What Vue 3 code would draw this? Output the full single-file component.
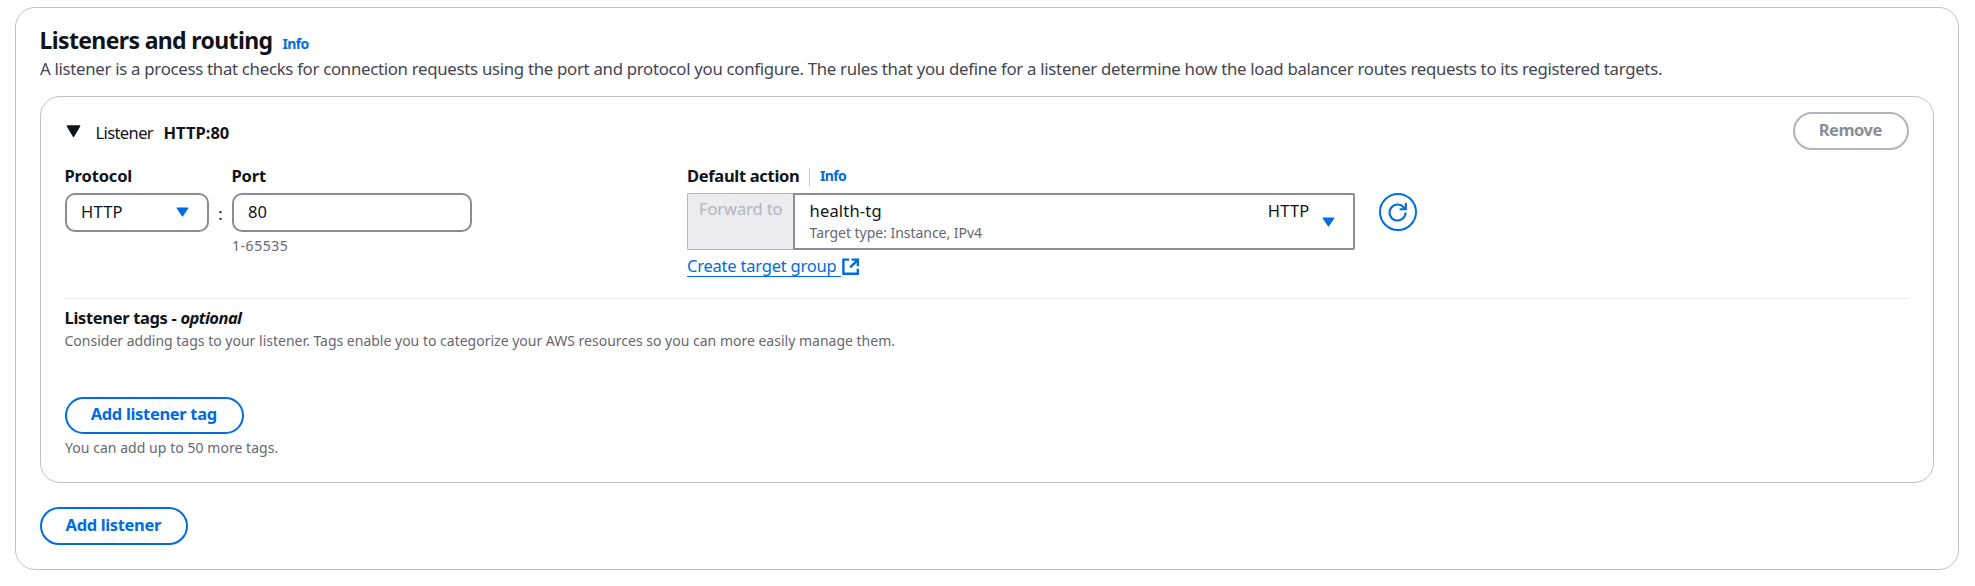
<script setup>
import { ref } from 'vue'

const protocol = ref('HTTP')
const port = ref('80')
const target = ref({ name: 'health-tg', detail: 'Target type: Instance, IPv4', protocol: 'HTTP' })
</script>

<template>
  <section class="panel">
    <header class="panel-head">
      <h2>Listeners and routing</h2>
      <a class="info">Info</a>
    </header>
    <p class="desc">A listener is a process that checks for connection requests using the port and protocol you configure. The rules that you define for a listener determine how the load balancer routes requests to its registered targets.</p>

    <div class="card">
      <div class="card-head">
        <div class="summary">
          <svg class="expand" width="15" height="13" viewBox="0 0 15 13"><path d="M1.3 1h12.4L7.5 11.3z" fill="#0f141a" stroke="#0f141a" stroke-width="1.4" stroke-linejoin="round" /></svg>
          <span class="summary-label">Listener</span>
          <strong class="summary-value">{{ protocol }}:{{ port }}</strong>
        </div>
        <button class="btn disabled">Remove</button>
      </div>

      <div class="fields">
        <div class="field protocol">
          <label class="lab-protocol">Protocol</label>
          <div class="control">
            <span class="http">{{ protocol }}</span>
            <svg class="caret" width="13" height="10" viewBox="0 0 13 10"><path d="M1.1 1h10.8L6.5 8.9z" fill="#006ce0" stroke="#006ce0" stroke-width="1.2" stroke-linejoin="round" /></svg>
          </div>
        </div>
        <span class="colon">:</span>
        <div class="field port">
          <label class="lab-port">Port</label>
          <div class="control">{{ port }}</div>
          <span class="hint">1-65535</span>
        </div>
        <div class="field action">
          <div class="action-label">
            <label>Default action</label>
            <i class="sep"></i>
            <a class="info">Info</a>
          </div>
          <div class="action-row">
            <div class="forward">Forward to</div>
            <div class="target">
              <div class="target-text">
                <span class="target-name">{{ target.name }}</span>
                <span class="target-detail">{{ target.detail }}</span>
              </div>
              <span class="http">{{ target.protocol }}</span>
              <svg class="caret" width="13" height="10" viewBox="0 0 13 10"><path d="M1.1 1h10.8L6.5 8.9z" fill="#006ce0" stroke="#006ce0" stroke-width="1.2" stroke-linejoin="round" /></svg>
            </div>
            <button class="refresh" aria-label="Refresh">
              <svg width="20" height="20" viewBox="0 0 20 20" fill="none" stroke="#006ce0" stroke-width="2.1"><path d="M17.6 10.6A8 8 0 1 1 15.6 5.2L17.6 7.2" /><path d="M17.8 1v6.3h-6.2" /></svg>
            </button>
          </div>
          <a class="create">
            <span>Create target group</span>
            <svg width="18" height="18" viewBox="0 0 18 18" fill="none" stroke="#006ce0" stroke-width="2.4"><path d="M7 1.6H1.4v14.2h14.4v-5" /><path d="M9.5 1.6h6.4v6.6M15.8 1.8L8.2 9.4" /></svg>
          </a>
        </div>
      </div>

      <div class="tags">
        <h3>Listener tags - <em>optional</em></h3>
        <p class="tags-desc">Consider adding tags to your listener. Tags enable you to categorize your AWS resources so you can more easily manage them.</p>
        <button class="btn add-tag">Add listener tag</button>
        <p class="tags-more">You can add up to 50 more tags.</p>
      </div>
    </div>

    <button class="btn add">Add listener</button>
  </section>
</template>

<style>
body { background: #fff; }
</style>

<style scoped>
* { box-sizing: border-box; }
.panel {
  width: 1944px;
  height: 563px;
  margin: 7px 0 0 15px;
  padding: 18px 24px 0;
  border: 1px solid #c2c2c6;
  border-radius: 20px;
  font: 16.5px/22px "Noto Sans", sans-serif;
  color: #0f141a;
  white-space: nowrap;
}
h2, h3, p { margin: 0; }
svg { display: block; flex: none; }
.panel-head { display: flex; align-items: baseline; gap: 10px; height: 32px; }
h2 { font-size: 23px; line-height: 28px; letter-spacing: -0.634px; margin-left: -0.5px; }
.info { font-size: 14px; font-weight: 700; letter-spacing: -0.6px; color: #006ce0; }
.desc { color: #424650; font-size: 16.8px; letter-spacing: -0.289px; height: 38px; }
.card {
  width: 1894px;
  height: 387px;
  padding: 15px 24px 0 24px;
  border: 1px solid #c2c2c6;
  border-radius: 20px;
}
.card-head { display: flex; justify-content: space-between; height: 53px; }
.summary { display: flex; padding-top: 10px; }
.expand { margin: 3px 14.5px 0 1px; }
.summary-label { letter-spacing: -0.6px; width: 67px; }
.summary-value { letter-spacing: 0; margin-left: 1px; }
.btn {
  display: block;
  height: 38px;
  padding: 0 1.5px 3px 0;
  border: 2px solid #006ce0;
  border-radius: 19px;
  background: #fff;
  font: 700 16.5px/22px "Noto Sans", sans-serif;
  letter-spacing: -0.33px;
  color: #006ce0;
}
.btn.disabled { width: 116px; border-color: #b4b4bb; color: #8c8c94; letter-spacing: -0.5px; }
.fields { display: flex; height: 133px; }
.field label { display: block; font-weight: 700; height: 28px; margin-left: -0.5px; }
.lab-protocol { letter-spacing: -0.15px; }
.lab-port { letter-spacing: -0.145px; }
.control {
  display: flex;
  align-items: center;
  justify-content: space-between;
  height: 39px;
  padding: 0 18px 1px 14px;
  border: 2px solid #8c8c94;
  border-radius: 10px;
}
.http { letter-spacing: 0.199px; }
.protocol { width: 144px; }
.colon { width: 23px; text-align: center; padding-top: 38px; }
.port { width: 240px; }
.hint { display: block; font-size: 14px; letter-spacing: 0.54px; color: #656871; margin-top: 3px; }
.action { margin-left: 215px; }
.action-label { display: flex; height: 28px; letter-spacing: -0.315px; }
.action-label label { margin-left: 0; }
.sep { width: 1px; height: 18px; margin: 3px 10px 0 9.5px; background: #c6c6cd; }
.action-row { display: flex; }
.forward {
  width: 106px;
  height: 57px;
  padding: 4px 0 0 11px;
  border: 1px solid #b4b4bb;
  border-right: 0;
  border-radius: 2px 0 0 2px;
  background: #ebebf0;
  color: #b4b4bb;
  letter-spacing: -0.107px;
}
.target {
  display: flex;
  width: 562px;
  height: 57px;
  padding: 5px 18px 0 14.5px;
  border: 2px solid #8c8c94;
  border-radius: 0 2px 2px 0;
}
.target-text { flex: 1; display: flex; flex-direction: column; }
.target-name { letter-spacing: 0.195px; }
.target-detail { font-size: 14px; letter-spacing: -0.037px; color: #656871; line-height: 21px; }
.target .caret { margin: 17px 0 0 12.5px; }
.refresh {
  display: flex;
  align-items: center;
  justify-content: center;
  width: 38px;
  height: 38px;
  margin-left: 24px;
  padding: 0;
  border: 2px solid #006ce0;
  border-radius: 50%;
  background: #fff;
}
.create { display: flex; color: #006ce0; letter-spacing: -0.217px; margin-top: 5px; }
.create span { width: 154px; height: 22px; border-bottom: 1px solid #006ce0; }
.create svg { margin: 3px 0 0 1px; }
.tags { border-top: 1px solid #ebebf0; padding-top: 8px; }
h3 { font-size: 16.5px; line-height: 22px; letter-spacing: -0.338px; margin-left: -0.5px; }
h3 em { letter-spacing: -0.55px; }
.tags-desc { font-size: 14px; color: #656871; height: 61px; padding-top: 1px; margin-left: -0.5px; }
.btn.add-tag { width: 179px; height: 37px; margin-top: 7px; }
.tags-more { font-size: 14px; letter-spacing: 0.046px; color: #656871; margin-top: 3px; }
.btn.add { width: 148px; margin-top: 24px; letter-spacing: -0.36px; }
</style>
